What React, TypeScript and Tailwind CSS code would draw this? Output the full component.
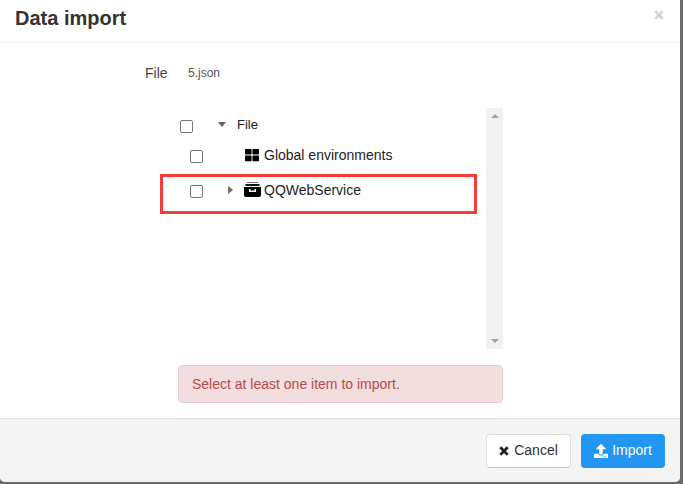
import { FaThLarge, FaUpload } from 'react-icons/fa';

const tri = 'w-0 h-0 border-solid border-transparent';

function Checkbox({ className }: { className: string }) {
  return (
    <span className={`block w-[13px] h-[13px] rounded-[2px] border border-[#767676] bg-white shrink-0 ${className}`} />
  );
}

function CloseIcon({ className }: { className: string }) {
  return (
    <svg viewBox="0 0 10 10" className={className}>
      <path d="M1.3 1.3 L8.7 8.7 M8.7 1.3 L1.3 8.7" stroke="currentColor" strokeWidth="2.8" fill="none" />
    </svg>
  );
}

function ArchiveIcon() {
  return (
    <svg width="17" height="15" viewBox="0 0 17 15" className="shrink-0 block">
      <rect x="3" y="0" width="11" height="1" fill="#777" />
      <rect x="1.5" y="2" width="14" height="2" fill="#111" />
      <path d="M0 5 H17 V13 a2 2 0 0 1 -2 2 H2 a2 2 0 0 1 -2 -2 Z" fill="#000" />
      <path d="M5 7 H6.5 V8.5 H10.5 V7 H12 V10 H5 Z" fill="#fff" />
    </svg>
  );
}

export default function App() {
  return (
    <div className="w-[683px] h-[484px] bg-[#6b6b6b] overflow-hidden font-['Liberation_Sans',Arial,sans-serif]">
      <div className="relative w-[680px] h-[482px] bg-white rounded-b-[5px] overflow-hidden flex flex-col">
        {/* header */}
        <div className="h-[43px] shrink-0 border-b border-[#eeeeee] pl-[15px] pr-[16px] flex items-start justify-between">
          <h1 className="mt-[4px] text-[20px] leading-[28px] font-bold text-[#333333]">Data import</h1>
          <CloseIcon className="mt-[10px] text-[#d5d5d5] w-[10px] h-[10px]" />
        </div>

        {/* body */}
        <div className="flex-1 flex flex-col pl-[145px]">
          <div className="mt-[21px] h-[18px] flex items-center">
            <span className="w-[43px] text-[14px] text-[#444444]">File</span>
            <span className="text-[12px] text-[#555555]">5.json</span>
          </div>

          <div className="mt-[26px] ml-[33px] w-[325px] h-[241px] flex">
            <div className="w-[308px] pt-[7px]">
              <div className="h-[18px] flex items-center">
                <Checkbox className="ml-[2px] mt-[5px]" />
                <span className={`${tri} ml-[25px] border-x-[4px] border-t-[5px] border-t-[#666666]`} />
                <span className="ml-[11px] mt-[1px] text-[13px] text-[#222222]">File</span>
              </div>
              <div className="mt-[12px] h-[20px] flex items-center">
                <Checkbox className="ml-[12px] mt-[2px]" />
                <FaThLarge className="ml-[42px] w-[14px] h-[14px] text-black" />
                <span className="ml-[5px] text-[14px] text-[#222222]">Global environments</span>
              </div>
              <div className="mt-[15px] h-[20px] flex items-center">
                <Checkbox className="ml-[12px] mt-[2px]" />
                <span className={`${tri} ml-[25px] border-y-[4px] border-l-[5px] border-l-[#7a6a5a]`} />
                <span className="ml-[11px] -mt-[2px]"><ArchiveIcon /></span>
                <span className="ml-[3px] text-[14px] text-[#222222]">QQWebService</span>
              </div>
            </div>
            <div className="w-[17px] bg-[#f1f1f1] flex flex-col items-center justify-between py-[6px]">
              <span className={`${tri} border-x-[4px] border-b-[4px] border-b-[#a3a3a3]`} />
              <span className={`${tri} border-x-[4px] border-t-[4px] border-t-[#a3a3a3]`} />
            </div>
          </div>

          <div className="mt-[16px] ml-[33px] w-[325px] h-[38px] rounded-[4px] border border-[#ebccd1] bg-[#f2dede] pl-[13px] flex items-center text-[14px] text-[#b94a48]">
            Select at least one item to import.
          </div>
        </div>

        {/* footer */}
        <div className="h-[64px] shrink-0 border-t border-[#dddddd] bg-[#f4f4f4] pr-[15px] flex items-center justify-end gap-[10px]">
          <button type="button" className="w-[85px] h-[34px] rounded-[4px] border border-[#dddddd] border-b-[#c4c4c4] bg-white flex items-center justify-center gap-[5px] text-[14px] text-[#333333]">
            <CloseIcon className="w-[10px] h-[10px] text-[#222222]" />
            Cancel
          </button>
          <button type="button" className="w-[84px] h-[34px] rounded-[4px] bg-[#2196f3] flex items-center justify-center gap-[4px] text-[14px] text-white">
            <FaUpload className="w-[14px] h-[14px]" />
            Import
          </button>
        </div>

        {/* red annotation drawn over the screenshot */}
        <div className="absolute left-[160px] top-[174px] w-[317px] h-[40px] border-[3px] border-[#f53a3a] pointer-events-none" />
      </div>
    </div>
  );
}
